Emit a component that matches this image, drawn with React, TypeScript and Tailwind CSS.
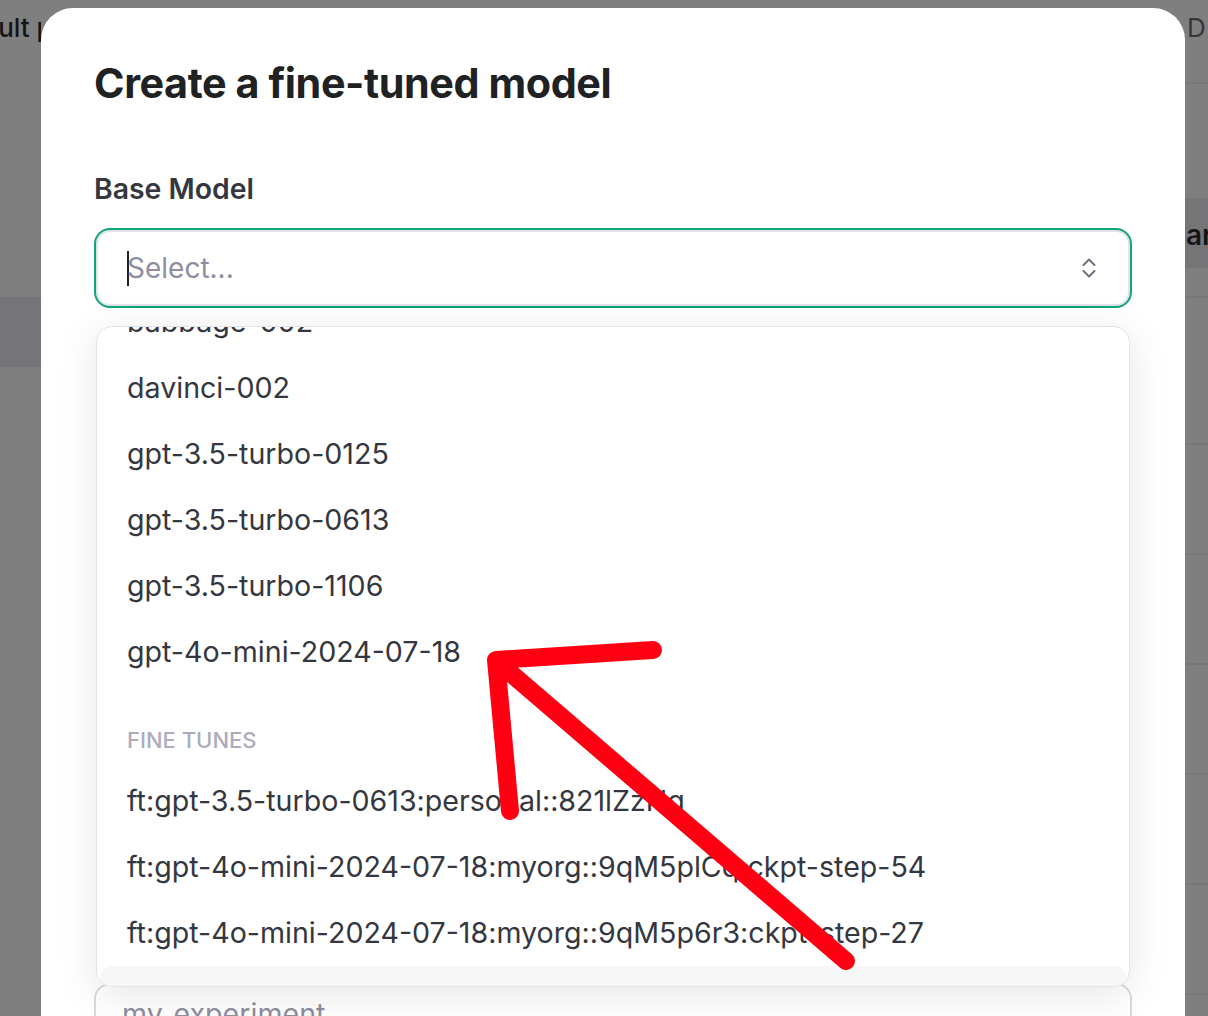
import React from "react"

const baseModels = [
  "babbage-002",
  "davinci-002",
  "gpt-3.5-turbo-0125",
  "gpt-3.5-turbo-0613",
  "gpt-3.5-turbo-1106",
  "gpt-4o-mini-2024-07-18",
]

const fineTunes = [
  "ft:gpt-3.5-turbo-0613:personal::821lZzNg",
  "ft:gpt-4o-mini-2024-07-18:myorg::9qM5plCq:ckpt-step-54",
  "ft:gpt-4o-mini-2024-07-18:myorg::9qM5p6r3:ckpt-step-27",
  "ft:gpt-4o-mini-2024-07-18:myorg::9qM5p6r3",
]

function Option({ label, active }: { label: string; active?: boolean }) {
  return (
    <div
      className={`mx-[3px] h-[66px] flex items-center pl-[27px] rounded-xl text-[28.6px] text-[#353740] whitespace-nowrap ${
        active ? "bg-[#f7f7f8]" : ""
      }`}
    >
      {label}
    </div>
  )
}

export default function App() {
  return (
    <div className="relative h-[1016px] w-full overflow-hidden bg-[#7f7f7f] font-['Inter',sans-serif]">
      {/* dimmed page behind the modal */}
      <div className="flex h-full">
        <div className="w-[41px] shrink-0 overflow-hidden">
          <div className="pt-[8px] -ml-[60px] whitespace-nowrap text-[26px] font-medium text-[#141416]">
            Default prompt
          </div>
          <div className="mt-[250px] h-[70px] bg-[#747479]" />
        </div>
        <div className="flex-1" />
        <div className="w-[23px] shrink-0 overflow-hidden">
          <div className="h-[84px] border-b-2 border-[#777777] pt-[8px] pl-[2px] text-[26px] text-[#35353d]">
            D
          </div>
          <div className="mt-[114px] h-[70px] bg-[#757577] pt-[19px] text-[28px] font-semibold leading-[36px] text-[#151517] -ml-[33px] whitespace-nowrap">
            Year
          </div>
          <div className="h-[30px] border-b-2 border-[#777777]" />
          {[0, 1, 2, 3, 4, 5, 6].map((i) => (
            <div key={i} className={`${i === 0 ? "h-[147px]" : "h-[110px]"} border-b-2 border-[#777777]`} />
          ))}
        </div>
      </div>

      {/* modal */}
      <div className="absolute left-[41px] top-[8px] bottom-0 w-[1144px] rounded-t-[32px] bg-white px-[53px] pt-[51px]">
        <h2 className="text-[41.3px] font-bold leading-[48px] tracking-[-0.01em] text-[#202123]">
          Create a fine-tuned model
        </h2>

        <div className="mt-[64px] text-[28.4px] font-semibold leading-[36px] text-[#353740]">Base Model</div>

        <div className="relative mt-[21px]">
          <div className="flex h-[80px] items-center rounded-2xl border-2 border-[#10a37f] pl-[31px] pr-[33px] shadow-[inset_0_0_0_2px_#e2e2e9]">
            <span className="-mr-[2px] h-[35px] w-[2px] bg-[#202123]" />
            <span className="flex-1 text-[28px] text-[#8e8ea0]">Select...</span>
            <svg width="16" height="22" viewBox="0 0 16 22" fill="none" stroke="#6e6e80" strokeWidth="2" strokeLinecap="round" strokeLinejoin="round">
              <path d="M2.5 8 L8 2.5 L13.5 8" />
              <path d="M2.5 14 L8 19.5 L13.5 14" />
            </svg>
          </div>

          {/* open menu */}
          <div className="absolute left-[2px] right-[2px] top-[98px] z-10 h-[661px] overflow-hidden rounded-2xl border border-[#e3e3ea] bg-white shadow-[0_8px_40px_rgba(0,0,0,0.10)]">
            <div className="-mt-[38px]">
              {baseModels.map((m) => (
                <Option key={m} label={m} />
              ))}
              <div className="mt-[39px] mb-[12px] h-[32px] pl-[30px] text-[22px] font-medium leading-[32px] text-[#acacbe]">
                FINE TUNES
              </div>
              {fineTunes.map((m, i) => (
                <Option key={m} label={m} active={i === 3} />
              ))}
            </div>
          </div>
        </div>

        <div className="mt-[675px] h-[80px] rounded-2xl border-2 border-[#d9d9e3] px-[26px] pt-[12px] text-[28.6px] leading-[34px] text-[#8e8ea0]">
          my_experiment
        </div>
      </div>

      {/* red annotation arrow */}
      <svg className="pointer-events-none absolute inset-0 z-20" width="1208" height="1016" viewBox="0 0 1208 1016" fill="none">
        <g stroke="#ff0013" strokeWidth="18" strokeLinecap="round" strokeLinejoin="round">
          <polyline points="653,650 496,660 510,811" />
          <line x1="500" y1="664" x2="846" y2="961" />
        </g>
      </svg>
    </div>
  )
}
